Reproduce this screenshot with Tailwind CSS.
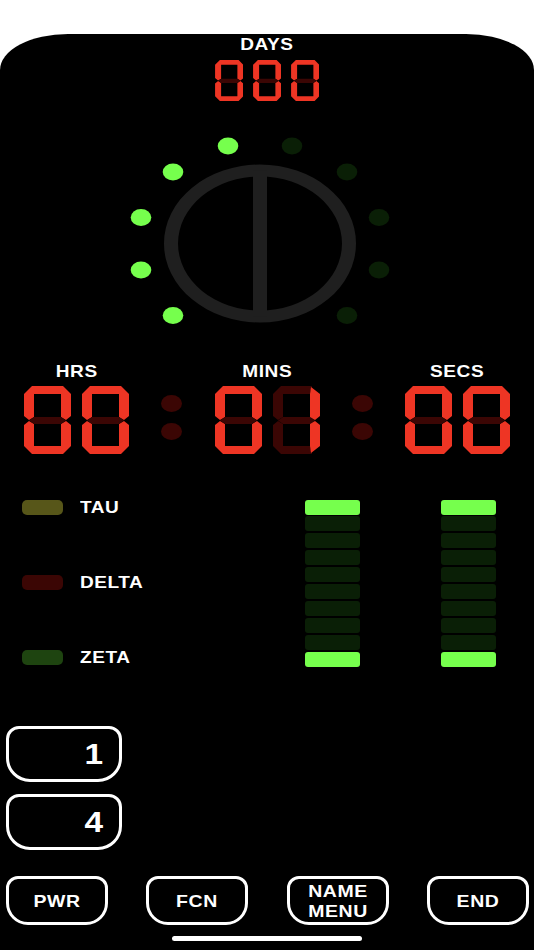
<!DOCTYPE html>
<html lang="en">
<head>
  <meta charset="utf-8"/>
  <title>Timer</title>
  <script src="https://cdn.jsdelivr.net/npm/@tailwindcss/browser@4"></script>
</head>
<body class="bg-white font-['Liberation_Sans',sans-serif] font-bold text-white overflow-hidden">
  <!-- digit shapes -->
  <svg class="hidden">
    <symbol id="seg-on-0" viewBox="0 0 47 68">
      <polygon class="fill-[#ee3524]" points="8,0 39,0 47,8 47,30 42,34 37,31 37,8 10,8 10,31 5,34 0,30 0,8"/>
      <polygon class="fill-[#ee3524]" points="5,35 10,38 10,60 37,60 37,38 42,35 47,39 47,60 39,68 8,68 0,60 0,39"/>
      <polygon class="fill-[#3b0604]" points="5,34.5 10,31 37,31 42,34.5 37,38 10,38"/>
    </symbol>
    <symbol id="seg-on-1" viewBox="0 0 47 68">
      <polygon class="fill-[#3b0604]" points="8,0 39,0 37,8 10,8 10,31 5,34 0,30 0,8"/>
      <polygon class="fill-[#3b0604]" points="5,35 10,38 10,60 37,60 39,68 8,68 0,60 0,39"/>
      <polygon class="fill-[#3b0604]" points="5,34.5 10,31 37,31 42,34.5 37,38 10,38"/>
      <polygon class="fill-[#ee3524]" points="38,1 47,8 47,30 42,34 37,31 37,8"/>
      <polygon class="fill-[#ee3524]" points="42,35 47,39 47,60 38,67 37,60 37,38"/>
    </symbol>
  </svg>

  <main class="relative mt-[34px] h-[916px] bg-black rounded-tl-[68px_36px] rounded-tr-[68px_36px]">
    <!-- days -->
    <section class="flex flex-col items-center">
      <div class="h-[20px] leading-[22px] text-[17px] tracking-[0.5px] scale-x-[1.12]">DAYS</div>
      <div class="mt-[5.5px] flex gap-[9.5px]">
        <svg class="w-[28.5px] h-[41px]"><use href="#seg-on-0"/></svg>
        <svg class="w-[28.5px] h-[41px]"><use href="#seg-on-0"/></svg>
        <svg class="w-[28.5px] h-[41px]"><use href="#seg-on-0"/></svg>
      </div>
    </section>

    <!-- dial -->
    <svg class="block w-[534px] h-[260.5px]" viewBox="0 100.5 534 260.5">
      <path class="fill-[#1f1f1f]" fill-rule="evenodd" d="M164 243a96 79 0 1 0 192 0a96 79 0 1 0 -192 0z M178 243a82 67 0 1 0 164 0a82 67 0 1 0 -164 0z"/>
      <rect class="fill-[#1f1f1f]" x="253" y="170" width="14" height="146"/>
      <g class="fill-[#76ff4d]">
        <ellipse cx="228" cy="145.5" rx="10.3" ry="8.5"/>
        <ellipse cx="173" cy="171.5" rx="10.3" ry="8.5"/>
        <ellipse cx="141" cy="217" rx="10.3" ry="8.5"/>
        <ellipse cx="141" cy="269.5" rx="10.3" ry="8.5"/>
        <ellipse cx="173" cy="315" rx="10.3" ry="8.5"/>
      </g>
      <g class="fill-[#0a1f06]">
        <ellipse cx="292" cy="145.5" rx="10.3" ry="8.5"/>
        <ellipse cx="347" cy="171.5" rx="10.3" ry="8.5"/>
        <ellipse cx="379" cy="217" rx="10.3" ry="8.5"/>
        <ellipse cx="379" cy="269.5" rx="10.3" ry="8.5"/>
        <ellipse cx="347" cy="315" rx="10.3" ry="8.5"/>
      </g>
    </svg>

    <!-- clock -->
    <section class="flex justify-between items-end px-[24px]">
      <div class="flex flex-col items-center w-[105px]">
        <div class="h-[20px] leading-[22px] text-[17px] tracking-[0.5px] scale-x-[1.12]">HRS</div>
        <div class="mt-[5px] flex gap-[11px]">
          <svg class="w-[47px] h-[68px]"><use href="#seg-on-0"/></svg>
          <svg class="w-[47px] h-[68px]"><use href="#seg-on-0"/></svg>
        </div>
      </div>
      <div class="flex flex-col gap-[11px] mb-[14.5px]">
        <div class="w-[21px] h-[17px] rounded-[50%] bg-[#3b0604]"></div>
        <div class="w-[21px] h-[17px] rounded-[50%] bg-[#3b0604]"></div>
      </div>
      <div class="flex flex-col items-center w-[105px]">
        <div class="h-[20px] leading-[22px] text-[17px] tracking-[0.5px] scale-x-[1.12]">MINS</div>
        <div class="mt-[5px] flex gap-[11px]">
          <svg class="w-[47px] h-[68px]"><use href="#seg-on-0"/></svg>
          <svg class="w-[47px] h-[68px]"><use href="#seg-on-1"/></svg>
        </div>
      </div>
      <div class="flex flex-col gap-[11px] mb-[14.5px]">
        <div class="w-[21px] h-[17px] rounded-[50%] bg-[#3b0604]"></div>
        <div class="w-[21px] h-[17px] rounded-[50%] bg-[#3b0604]"></div>
      </div>
      <div class="flex flex-col items-center w-[105px]">
        <div class="h-[20px] leading-[22px] text-[17px] tracking-[0.5px] scale-x-[1.12]">SECS</div>
        <div class="mt-[5px] flex gap-[11px]">
          <svg class="w-[47px] h-[68px]"><use href="#seg-on-0"/></svg>
          <svg class="w-[47px] h-[68px]"><use href="#seg-on-0"/></svg>
        </div>
      </div>
    </section>

    <!-- legend and level bars -->
    <section class="mt-[45.5px] flex pl-[22px] pr-[38px]">
      <div class="flex flex-col gap-[60px] pt-[0.5px] text-[17px] tracking-[0.5px]">
        <div class="h-[15px] flex items-center gap-[17px]"><span class="w-[41px] h-[15px] rounded-[5px] bg-[#575619]"></span><span class="origin-left scale-x-[1.12]">TAU</span></div>
        <div class="h-[15px] flex items-center gap-[17px]"><span class="w-[41px] h-[15px] rounded-[5px] bg-[#3b0604]"></span><span class="origin-left scale-x-[1.12]">DELTA</span></div>
        <div class="h-[15px] flex items-center gap-[17px]"><span class="w-[41px] h-[15px] rounded-[5px] bg-[#1e4410]"></span><span class="origin-left scale-x-[1.12]">ZETA</span></div>
      </div>
      <div class="ml-auto flex gap-[81px]">
        <div class="flex flex-col gap-[1.9px] w-[55px]">
          <div class="h-[15px] rounded-[3px] bg-[#76ff4d]"></div>
          <div class="h-[15px] rounded-[3px] bg-[#0a1f06]"></div>
          <div class="h-[15px] rounded-[3px] bg-[#0a1f06]"></div>
          <div class="h-[15px] rounded-[3px] bg-[#0a1f06]"></div>
          <div class="h-[15px] rounded-[3px] bg-[#0a1f06]"></div>
          <div class="h-[15px] rounded-[3px] bg-[#0a1f06]"></div>
          <div class="h-[15px] rounded-[3px] bg-[#0a1f06]"></div>
          <div class="h-[15px] rounded-[3px] bg-[#0a1f06]"></div>
          <div class="h-[15px] rounded-[3px] bg-[#0a1f06]"></div>
          <div class="h-[15px] rounded-[3px] bg-[#76ff4d]"></div>
        </div>
        <div class="flex flex-col gap-[1.9px] w-[55px]">
          <div class="h-[15px] rounded-[3px] bg-[#76ff4d]"></div>
          <div class="h-[15px] rounded-[3px] bg-[#0a1f06]"></div>
          <div class="h-[15px] rounded-[3px] bg-[#0a1f06]"></div>
          <div class="h-[15px] rounded-[3px] bg-[#0a1f06]"></div>
          <div class="h-[15px] rounded-[3px] bg-[#0a1f06]"></div>
          <div class="h-[15px] rounded-[3px] bg-[#0a1f06]"></div>
          <div class="h-[15px] rounded-[3px] bg-[#0a1f06]"></div>
          <div class="h-[15px] rounded-[3px] bg-[#0a1f06]"></div>
          <div class="h-[15px] rounded-[3px] bg-[#0a1f06]"></div>
          <div class="h-[15px] rounded-[3px] bg-[#76ff4d]"></div>
        </div>
      </div>
    </section>

    <!-- readouts -->
    <section class="mt-[59.5px] ml-[6px] flex flex-col gap-[12px] w-[116px]">
      <div class="h-[56px] flex items-center justify-end pt-[1px] pr-[16px] border-[3px] border-white rounded-[13px_13px_24px_24px] text-[29px]"><span class="origin-right scale-x-[1.15]">1</span></div>
      <div class="h-[56px] flex items-center justify-end pt-[1px] pr-[16px] border-[3px] border-white rounded-[13px_13px_24px_24px] text-[29px]"><span class="origin-right scale-x-[1.15]">4</span></div>
    </section>

    <!-- buttons -->
    <nav class="mt-[26px] pl-[6px] pr-[5px] flex justify-between text-[16.5px] tracking-[0.5px] leading-[20px] text-center">
      <button class="w-[102px] h-[49px] border-[3px] border-white rounded-[12px_12px_22px_22px]"><span class="block scale-x-[1.18]">PWR</span></button>
      <button class="w-[102px] h-[49px] border-[3px] border-white rounded-[12px_12px_22px_22px]"><span class="block scale-x-[1.18]">FCN</span></button>
      <button class="w-[102px] h-[49px] border-[3px] border-white rounded-[12px_12px_22px_22px]"><span class="block scale-x-[1.18]">NAME<br/>MENU</span></button>
      <button class="w-[102px] h-[49px] border-[3px] border-white rounded-[12px_12px_22px_22px]"><span class="block scale-x-[1.18]">END</span></button>
    </nav>

    <!-- home indicator -->
    <div class="absolute left-[172px] bottom-[9px] w-[190px] h-[5px] rounded-full bg-white"></div>
  </main>
</body>
</html>
